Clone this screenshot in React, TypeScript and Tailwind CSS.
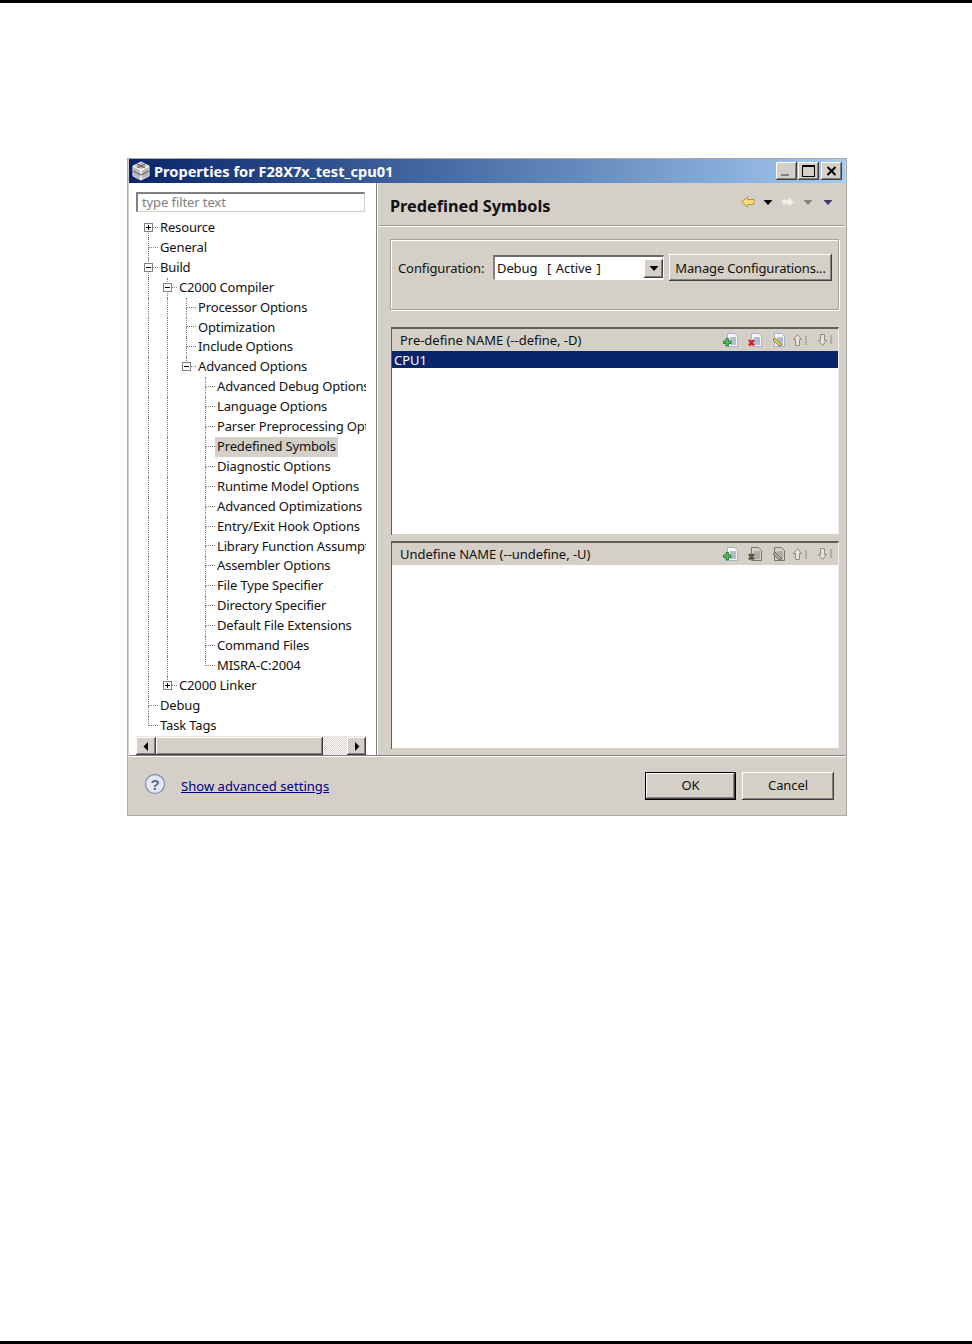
const font = { fontFamily: '"Noto Sans", "Liberation Sans", sans-serif' }

const raised = 'shadow-[inset_-1px_-1px_0_#404040,inset_1px_1px_0_#ffffff,inset_-2px_-2px_0_#808080]'

type Row = { label: string; level: number; toggle?: '+' | '-'; first?: boolean; last?: boolean; selected?: boolean; guides: boolean[] }

const rows: Row[] = [
  { label: 'Resource', level: 0, toggle: '+', first: true, guides: [] },
  { label: 'General', level: 0, guides: [] },
  { label: 'Build', level: 0, toggle: '-', guides: [] },
  { label: 'C2000 Compiler', level: 1, toggle: '-', guides: [true] },
  { label: 'Processor Options', level: 2, guides: [true, true] },
  { label: 'Optimization', level: 2, guides: [true, true] },
  { label: 'Include Options', level: 2, guides: [true, true] },
  { label: 'Advanced Options', level: 2, toggle: '-', last: true, guides: [true, true] },
  { label: 'Advanced Debug Options', level: 3, guides: [true, true, false] },
  { label: 'Language Options', level: 3, guides: [true, true, false] },
  { label: 'Parser Preprocessing Options', level: 3, guides: [true, true, false] },
  { label: 'Predefined Symbols', level: 3, selected: true, guides: [true, true, false] },
  { label: 'Diagnostic Options', level: 3, guides: [true, true, false] },
  { label: 'Runtime Model Options', level: 3, guides: [true, true, false] },
  { label: 'Advanced Optimizations', level: 3, guides: [true, true, false] },
  { label: 'Entry/Exit Hook Options', level: 3, guides: [true, true, false] },
  { label: 'Library Function Assumptions', level: 3, guides: [true, true, false] },
  { label: 'Assembler Options', level: 3, guides: [true, true, false] },
  { label: 'File Type Specifier', level: 3, guides: [true, true, false] },
  { label: 'Directory Specifier', level: 3, guides: [true, true, false] },
  { label: 'Default File Extensions', level: 3, guides: [true, true, false] },
  { label: 'Command Files', level: 3, guides: [true, true, false] },
  { label: 'MISRA-C:2004', level: 3, last: true, guides: [true, true, false] },
  { label: 'C2000 Linker', level: 1, toggle: '+', last: true, guides: [true] },
  { label: 'Debug', level: 0, guides: [] },
  { label: 'Task Tags', level: 0, last: true, guides: [] },
]

function TreeRow({ row }: { row: Row }) {
  return (
    <div className="flex h-[19.92px] text-[13px] leading-[19px] tracking-[-0.15px] text-[#111]">
      {row.guides.map((on, i) => (
        <div key={i} className={'w-[19px] shrink-0 ' + (on ? 'border-l border-dotted border-[#808080]' : '')} />
      ))}
      <div className="relative w-[10px] shrink-0">
        <div className={'h-1/2 border-b border-dotted border-[#808080] ' + (row.first ? '' : 'border-l')} />
        <div className={'h-1/2 border-dotted border-[#808080] ' + (row.last ? '' : 'border-l')} />
        {row.toggle && (
          <div className="absolute left-[-4px] top-[5px] flex h-[9px] w-[9px] items-center justify-center border border-[#808080] bg-white">
            <div className="relative h-px w-[5px] bg-black">
              {row.toggle === '+' && <div className="absolute left-[2px] top-[-2px] h-[5px] w-px bg-black" />}
            </div>
          </div>
        )}
      </div>
      <span className={'whitespace-nowrap px-[2px] ' + (row.selected ? 'bg-[#d4d0c8]' : '')}>{row.label}</span>
    </div>
  )
}

function Triangle({ dir, color = '#000' }: { dir: 'left' | 'right' | 'down'; color?: string }) {
  const pts = dir === 'left' ? '6,1 6,10 1.5,5.5' : dir === 'right' ? '2,1 2,10 6.5,5.5' : '0.5,2 9.5,2 5,7'
  return (
    <svg width={dir === 'down' ? 10 : 8} height={dir === 'down' ? 8 : 11}>
      <polygon points={pts} fill={color} />
    </svg>
  )
}

function Page({ disabled, children }: { disabled?: boolean; children?: React.ReactNode }) {
  const line = disabled ? '#8a8a86' : '#6f86a8'
  return (
    <svg width="16" height="16" viewBox="0 0 16 16">
      <path d="M4.5 1.5h7l3 3v10h-10z" fill={disabled ? '#d4d0c8' : '#f4f6fa'} stroke={disabled ? '#77776f' : '#a8b4c8'} />
      <path d="M7 6h6M7 8h6M7 10h6M7 12h6" stroke={line} />
      {children}
    </svg>
  )
}

function AddIcon() {
  return (
    <Page>
      <path d="M3 6.5h2.5V9H8v2.5H5.5V14H3v-2.5H.5V9H3z" fill="#58b860" stroke="#1c6e28" strokeWidth="0.8" />
    </Page>
  )
}

function DelIcon({ disabled }: { disabled?: boolean }) {
  return (
    <Page disabled={disabled}>
      <path d="M2 8l5 5.5M7 8l-5 5.5" stroke={disabled ? '#55554f' : '#d8202c'} strokeWidth="2.6" />
    </Page>
  )
}

function EditIcon({ disabled }: { disabled?: boolean }) {
  return (
    <Page disabled={disabled}>
      <path d="M3 8l2-2 7 7-3 1z" fill={disabled ? '#a8a8a0' : '#e8c860'} stroke={disabled ? '#66665f' : '#806820'} strokeWidth="0.8" />
    </Page>
  )
}

function MoveIcon({ up }: { up?: boolean }) {
  return (
    <svg width="16" height="16" viewBox="0 0 16 16" fill="none" stroke="#8c8c86">
      <g transform={up ? undefined : 'translate(0 16) scale(1 -1)'}>
        <path d="M6.5 2.5l4 5h-2v6h-4v-6h-2z" fill="#e6e3dc" />
        <path d="M15 4v9" />
      </g>
    </svg>
  )
}

function Toolbar({ enabled }: { enabled: boolean }) {
  return (
    <div className="flex items-center">
      <span className="w-[24px]"><AddIcon /></span>
      <span className="w-[23px]"><DelIcon disabled={!enabled} /></span>
      <span className="w-[21px]"><EditIcon disabled={!enabled} /></span>
      <span className="w-[25px]"><MoveIcon up /></span>
      <span className="w-[16px]"><MoveIcon /></span>
    </div>
  )
}

function ListGroup({ title, enabled, items }: { title: string; enabled: boolean; items: string[] }) {
  return (
    <div className="ml-[13px] flex h-[208px] w-[448px] flex-col border-t-2 border-l border-r border-t-[#5f5f5b] border-l-[#5f5f5b] border-r-[#f0eee8]">
      <div className="flex h-[22px] shrink-0 items-center justify-between bg-[#d4d0c8] pl-[8px] pr-[6px] text-[13px] tracking-[-0.03px] text-[#111]">
        <span className="pt-[2px]">{title}</span>
        <Toolbar enabled={enabled} />
      </div>
      <div className="flex-1 border-b border-[#d4d0c8] bg-white">
        {items.map(item => (
          <div key={item} className="h-[17px] bg-[#0a246a] pl-[2px] text-[13px] leading-[19px] text-white">{item}</div>
        ))}
      </div>
    </div>
  )
}

function WindowButton({ children }: { children: React.ReactNode }) {
  return (
    <div className={'flex h-[18px] w-[21px] items-center justify-center bg-[#d4d0c8] ' + raised}>{children}</div>
  )
}

export default function App() {
  return (
    <div className="flex h-[1344px] w-[972px] flex-col bg-white" style={font}>
      <div className="h-[3px] bg-black" />
      <div className="ml-[127px] mt-[155px] flex h-[658px] w-[720px] flex-col border border-[#a8a8a4] bg-[#d4d0c8] px-px">
        {/* title bar */}
        <div className="flex h-[24px] shrink-0 items-center bg-gradient-to-r from-[#0a246a] to-[#a6caf0] pl-[2px] pr-[3px]">
          <svg width="20" height="20" viewBox="0 0 20 20" className="mr-[3px]">
            <path d="M10 1l8 4v10l-8 4-8-4V5z" fill="#b8b8b8" stroke="#e8e8e8" />
            <path d="M2 5l8 4 8-4M10 9v10" stroke="#f4f4f4" strokeWidth="1.6" fill="none" />
            <path d="M6 3l8 4M14 3L6 7M2 10l8 4 8-4" stroke="#555" strokeWidth="1" fill="none" />
          </svg>
          <span className="whitespace-nowrap pt-px text-[14.6px] font-bold text-white">Properties for F28X7x_test_cpu01</span>
          <div className="ml-auto flex gap-[1px]">
            <WindowButton>
              <div className="mt-[8px] mr-[3px] h-[2px] w-[8px] bg-[#808080]" />
            </WindowButton>
            <WindowButton>
              <div className="h-[12px] w-[13px] border border-t-2 border-black" />
            </WindowButton>
            <div className="ml-[1px]">
              <WindowButton>
                <svg width="11" height="10"><path d="M1.5 1l8 8M9.5 1l-8 8" stroke="#000" strokeWidth="2" /></svg>
              </WindowButton>
            </div>
          </div>
        </div>

        <div className="flex h-[573px] shrink-0 border-b border-[#808080]">
          {/* left pane */}
          <div className="flex w-[248px] shrink-0 flex-col border-r border-[#808080] bg-white">
            <div className="ml-[7px] mt-[9px] h-[20px] w-[229px] shrink-0 border-t-2 border-l-2 border-r border-b border-t-[#808080] border-l-[#808080] border-r-[#d4d0c8] border-b-[#d4d0c8] pl-[4px] text-[13px] leading-[17px] tracking-[-0.1px] text-[#808080]">
              type filter text
            </div>
            <div className="ml-[7px] mt-[6px] w-[230px] flex-1 overflow-hidden pl-[12px]">
              {rows.map(row => <TreeRow key={row.label} row={row} />)}
            </div>
            <div className="ml-[7px] flex h-[19px] w-[230px] shrink-0 border-t border-[#e8e6e0]">
              <div className={'flex w-[20px] items-center justify-center bg-[#d4d0c8] ' + raised}><Triangle dir="left" /></div>
              <div className={'w-[167px] bg-[#d4d0c8] ' + raised} />
              <div className="flex-1 bg-[repeating-conic-gradient(#d4d0c8_0_25%,#ffffff_0_50%)] bg-[length:2px_2px]" />
              <div className={'flex w-[19px] items-center justify-center bg-[#d4d0c8] ' + raised}><Triangle dir="right" /></div>
            </div>
          </div>

          {/* right pane */}
          <div className="flex-1 border-l border-white">
            <div className="flex h-[43px] items-center justify-between border-b border-[#9c9a94] pl-[12px] pr-[12px] pt-[5px] shadow-[0_1px_0_#ffffff]">
              <span className="text-[16.3px] font-bold text-[#111]">Predefined Symbols</span>
              <div className="mb-[10px] flex items-center">
                <svg width="16" height="14" className="mr-[7px]">
                  <path d="M7.5 2L1.5 7l6 5V9.5h6.5v-5H7.5z" fill="#f8d878" stroke="#b89838" />
                </svg>
                <span className="mr-[7px]"><Triangle dir="down" /></span>
                <svg width="16" height="14" className="mr-[7px]">
                  <path d="M8.5 2l6 5-6 5V9.5H2v-5h6.5z" fill="#eeeeea" stroke="#d8d8d0" />
                </svg>
                <span className="mr-[10px]"><Triangle dir="down" color="#808080" /></span>
                <Triangle dir="down" color="#3c3c64" />
              </div>
            </div>

            <div className="ml-[12px] mt-[13px] flex h-[71px] w-[449px] items-start border border-[#a4a29c] pl-[7px] pt-[15px] shadow-[inset_1px_1px_0_#ffffff,1px_1px_0_#ffffff]">
              <span className="mt-[4px] w-[95px] text-[13px] tracking-[-0.1px] text-[#111]">Configuration:</span>
              <div className="flex h-[25px] w-[171px] items-center justify-between border-t-2 border-l-2 border-r border-b border-t-[#6a6a66] border-l-[#808080] border-r-white border-b-white bg-white pl-[2px] text-[13px] tracking-[-0.1px] text-[#111]">
                <span className="whitespace-pre pt-px [word-spacing:1.5px]">Debug  [ Active ]</span>
                <div className={'flex h-[19px] w-[19px] items-center justify-center bg-[#d4d0c8] ' + raised}><Triangle dir="down" /></div>
              </div>
              <div className={'ml-[5px] mt-[-1px] flex h-[27px] w-[163px] items-center justify-center whitespace-nowrap bg-[#d4d0c8] pt-[2px] text-[13px] tracking-[-0.15px] text-[#111] ' + raised}>
                Manage Configurations...
              </div>
            </div>

            <div className="mt-[17px]">
              <ListGroup title="Pre-define NAME (--define, -D)" enabled items={['CPU1']} />
            </div>
            <div className="mt-[6px]">
              <ListGroup title="Undefine NAME (--undefine, -U)" enabled={false} items={[]} />
            </div>
          </div>
        </div>

        {/* footer */}
        <div className="flex flex-1 items-center pl-[15px] pr-[11px] shadow-[inset_0_1px_0_#ffffff]">
          <svg width="22" height="22" viewBox="0 0 22 22" className="mb-[3px]">
            <circle cx="11" cy="11" r="9.5" fill="#e4e8f4" stroke="#8c98b8" strokeWidth="1.4" />
            <text x="11" y="16.5" textAnchor="middle" fontSize="15" fontWeight="700" fill="#5a6688" fontFamily="Liberation Sans">?</text>
          </svg>
          <span className="ml-[15px] pt-[3px] text-[13px] tracking-[0.05px] text-[#000080] underline">Show advanced settings</span>
          <div className="ml-auto flex gap-[6px]">
            <div className="h-[28px] w-[91px] border border-black">
              <div className={'flex h-full items-center justify-center bg-[#d4d0c8] text-[13px] tracking-[-0.1px] text-[#111] ' + raised}>OK</div>
            </div>
            <div className={'flex h-[28px] w-[92px] items-center justify-center bg-[#d4d0c8] text-[13px] tracking-[-0.1px] text-[#111] ' + raised}>Cancel</div>
          </div>
        </div>
      </div>
      <div className="mt-auto h-[3px] bg-black" />
    </div>
  )
}
